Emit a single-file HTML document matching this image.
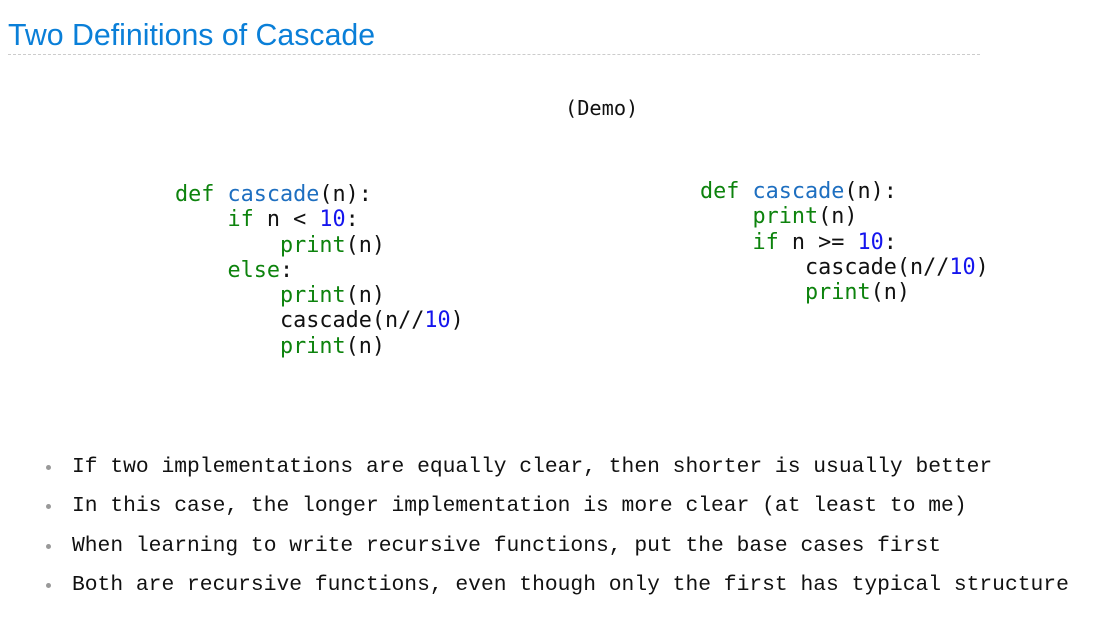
<!DOCTYPE html>
<html><head><meta charset="utf-8"><style>
body{margin:0;width:1097px;height:636px;background:#fff;position:relative;overflow:hidden}
.t{position:absolute;left:8px;top:19px;font:30.3px "Liberation Sans",sans-serif;color:#0a7fd8;white-space:nowrap}
.hr{position:absolute;left:8px;top:54px;width:972px;border-top:1px dashed #ccc}
.demo{position:absolute;left:565px;top:96px;font:20.3px "DejaVu Sans Mono",monospace;color:#111;white-space:pre}
pre{position:absolute;margin:0;font:21.8px/25.3px "DejaVu Sans Mono",monospace;color:#111}
.k{color:#0d830d}.f{color:#1e6fc0}.n{color:#1515ee}
.b{position:absolute;left:72px;font:21.3px "Liberation Mono",monospace;color:#111;white-space:nowrap}
.b:before{content:"";position:absolute;left:-26px;top:10px;width:5px;height:5px;border-radius:50%;background:#999}
</style></head><body>
<div class="t">Two Definitions of Cascade</div>
<div class="hr"></div>
<div class="demo">(Demo)</div>
<pre style="left:175px;top:182px"><span class="k">def</span> <span class="f">cascade</span>(n):
    <span class="k">if</span> n &lt; <span class="n">10</span>:
        <span class="k">print</span>(n)
    <span class="k">else</span>:
        <span class="k">print</span>(n)
        cascade(n//<span class="n">10</span>)
        <span class="k">print</span>(n)</pre>
<pre style="left:700px;top:179px"><span class="k">def</span> <span class="f">cascade</span>(n):
    <span class="k">print</span>(n)
    <span class="k">if</span> n &gt;= <span class="n">10</span>:
        cascade(n//<span class="n">10</span>)
        <span class="k">print</span>(n)</pre>
<div class="b" style="top:455px">If two implementations are equally clear, then shorter is usually better</div>
<div class="b" style="top:494px">In this case, the longer implementation is more clear (at least to me)</div>
<div class="b" style="top:534px">When learning to write recursive functions, put the base cases first</div>
<div class="b" style="top:573px">Both are recursive functions, even though only the first has typical structure</div>
</body></html>
